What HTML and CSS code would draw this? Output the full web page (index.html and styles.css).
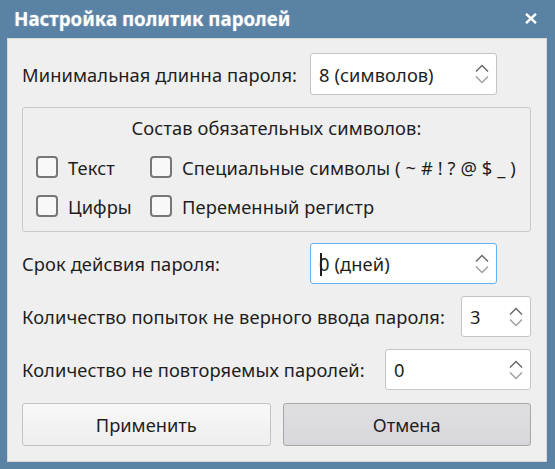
FILE: index.html
```html
<!DOCTYPE html>
<html lang="ru">
<head>
<meta charset="utf-8">
<link rel="stylesheet" href="styles.css">
</head>
<body>
<div class="window">
  <div class="titlebar">
    <span class="title">Настройка политик паролей</span>
    <svg class="close" width="12" height="11" viewBox="0 0 12 11"><path d="M1 0.8 L11 10.2 M11 0.8 L1 10.2" /></svg>
  </div>
  <div class="content">
    <div class="row row1">
      <span class="label wide">Минимальная длинна пароля:</span>
      <div class="spin w187"><span class="val">8 (символов)</span><svg class="arrows" width="14" height="20" viewBox="0 0 14 20"><path class="up" d="M1 7.5 L7 1.5 L13 7.5" /><path class="down" d="M1 12.5 L7 18.5 L13 12.5" /></svg></div>
    </div>
    <div class="group">
      <div class="group-title">Состав обязательных символов:</div>
      <div class="checks">
        <label class="check"><span class="box"></span>Текст</label>
        <label class="check"><span class="box"></span>Специальные символы ( ~ # ! ? @ $ _ )</label>
        <label class="check"><span class="box"></span>Цифры</label>
        <label class="check"><span class="box"></span>Переменный регистр</label>
      </div>
    </div>
    <div class="row row3">
      <span class="label wide">Срок дейсвия пароля:</span>
      <div class="spin w187 focus"><span class="val"><span class="caret"></span>0 (дней)</span><svg class="arrows" width="14" height="20" viewBox="0 0 14 20"><path class="up" d="M1 7.5 L7 1.5 L13 7.5" /><path class="down" d="M1 12.5 L7 18.5 L13 12.5" /></svg></div>
    </div>
    <div class="row row4">
      <span class="label grow">Количество попыток не верного ввода пароля:</span>
      <div class="spin w70"><span class="val">3</span><svg class="arrows" width="14" height="20" viewBox="0 0 14 20"><path class="up" d="M1 7.5 L7 1.5 L13 7.5" /><path class="down" d="M1 12.5 L7 18.5 L13 12.5" /></svg></div>
    </div>
    <div class="row row5">
      <span class="label grow">Количество не повторяемых паролей:</span>
      <div class="spin w146"><span class="val">0</span><svg class="arrows" width="14" height="20" viewBox="0 0 14 20"><path class="up" d="M1 7.5 L7 1.5 L13 7.5" /><path class="down" d="M1 12.5 L7 18.5 L13 12.5" /></svg></div>
    </div>
    <div class="buttons">
      <button class="btn apply">Применить</button>
      <button class="btn cancel">Отмена</button>
    </div>
  </div>
</div>
</body>
</html>
```
FILE: styles.css
```css
* { box-sizing: border-box; }
html, body { margin: 0; padding: 0; }
body {
  width: 555px;
  height: 469px;
  background: #5a82a5;
  font-family: "Noto Sans", "Open Sans", sans-serif;
  color: #1e1e1e;
  overflow: hidden;
}
.window {
  width: 555px;
  height: 469px;
  background: #5a82a5;
  padding: 0 8px 7px 7px;
  display: flex;
  flex-direction: column;
}
.titlebar {
  height: 38px;
  display: flex;
  align-items: center;
  justify-content: space-between;
  padding: 0 10px 1px 7px;
  color: #ffffff;
}
.title {
  font-weight: bold;
  font-size: 18.7px;
  text-shadow: 0 0 2px rgba(255,255,255,0.35);
}
.close path {
  fill: none;
  stroke: #ffffff;
  stroke-width: 2.4;
}
.content {
  flex: 1;
  background: #efefef;
  border: 1px solid #d8d8d8;
  padding: 14px 15px 0 14px;
  display: flex;
  flex-direction: column;
  font-size: 18.3px;
  letter-spacing: 0.1px;
}
.row {
  display: flex;
  align-items: center;
}
.label.wide { width: 288px; flex: none; }
.label.grow { flex: 1; }
.row1 { height: 42px; }
.row3 { height: 41px; margin-top: 11px; }
.row4 { height: 41px; margin-top: 12px; }
.row5 { height: 41px; margin-top: 12px; }
.spin {
  height: 100%;
  background: #ffffff;
  border: 1px solid #c4c4c4;
  border-radius: 3px;
  display: flex;
  align-items: center;
  justify-content: space-between;
  padding: 0 7px 0 8px;
  flex: none;
}
.spin.focus { border: 1px solid #63b3f0; }
.w187 { width: 187px; }
.w70 { width: 70px; }
.w146 { width: 146px; }
.val { position: relative; }
.caret {
  position: absolute;
  left: 1px;
  top: 2px;
  width: 1.5px;
  height: 23px;
  background: #1e1e1e;
}
.arrows { flex: none; }
.arrows path {
  fill: none;
  stroke-width: 1.5;
}
.arrows .up { stroke: #6a6a6a; }
.arrows .down { stroke: #a0a0a0; }
.group {
  margin-top: 12px;
  height: 125px;
  border: 1px solid #c9c9c9;
  border-radius: 3px;
  padding: 7px 0 0 13px;
}
.group-title {
  text-align: center;
  padding-right: 13px;
  height: 26px;
  line-height: 26px;
}
.checks {
  margin-top: 14px;
  display: grid;
  grid-template-columns: 114px auto;
  row-gap: 15px;
}
.check {
  display: flex;
  align-items: center;
  height: 24px;
}
.box {
  width: 22px;
  height: 22px;
  border: 2px solid #777777;
  border-radius: 4px;
  background: #f8f8f8;
  margin-right: 10px;
  flex: none;
}
.buttons {
  margin-top: 13px;
  display: flex;
  gap: 12px;
}
.btn {
  font-family: "Noto Sans", "Open Sans", sans-serif;
  font-size: 18.3px;
  color: #1e1e1e;
  height: 43px;
  border-radius: 3px;
  flex: 1;
}
.apply {
  background: linear-gradient(#f8f8f8, #eeeeee);
  border: 1px solid #c3c3c3;
}
.cancel {
  background: linear-gradient(#dfdfe2, #d8d8dc);
  border: 1px solid #a8a8a8;
}
```
